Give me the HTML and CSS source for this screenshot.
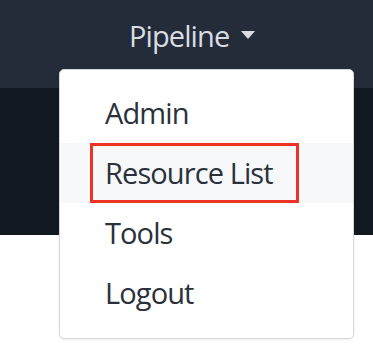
FILE: index.html
```html
<!DOCTYPE html>
<html>
<head>
<meta charset="utf-8">
<link rel="stylesheet" href="styles.css">
</head>
<body>
<nav class="navbar">
  <div class="nav-item">
    <span class="nav-link">Pipeline</span><span class="caret"></span>
    <div class="dropdown">
      <a class="dropdown-item">Admin</a>
      <a class="dropdown-item active">Resource List<span class="highlight"></span></a>
      <a class="dropdown-item">Tools</a>
      <a class="dropdown-item">Logout</a>
    </div>
  </div>
</nav>
<section class="hero"></section>
<main class="content"></main>
</body>
</html>
```

FILE: styles.css
```css
html, body {
  margin: 0;
  padding: 0;
  background: #ffffff;
  font-family: "Open Sans", "Noto Sans", sans-serif;
}
.navbar {
  height: 88px;
  background: #242c3a;
  display: flex;
  align-items: flex-start;
  padding-left: 129px;
  box-sizing: border-box;
}
.nav-item {
  position: relative;
  display: flex;
  align-items: center;
  padding-top: 16px;
}
.nav-link {
  color: #d9dde3;
  font-size: 29px;
  letter-spacing: -0.9px;
  line-height: 40px;
}
.caret {
  width: 0;
  height: 0;
  margin-left: 12px;
  margin-top: -3px;
  border-left: 7.5px solid transparent;
  border-right: 7.5px solid transparent;
  border-top: 8px solid #d9dde3;
}
.dropdown {
  position: absolute;
  left: -70px;
  top: 69px;
  width: 295px;
  height: 270px;
  box-sizing: border-box;
  background: #ffffff;
  border: 1px solid #d6d8db;
  border-radius: 5px;
  box-shadow: 0 1px 3px rgba(0,0,0,0.08);
  padding-top: 13px;
  display: flex;
  flex-direction: column;
  z-index: 2;
}
.dropdown-item {
  position: relative;
  display: block;
  height: 60px;
  line-height: 60px;
  padding-left: 45px;
  font-size: 29px;
  letter-spacing: -0.9px;
  color: #2a313b;
}
.dropdown-item.active {
  background: #f7f8fa;
}
.highlight {
  position: absolute;
  left: 30px;
  top: 0;
  width: 209px;
  height: 60px;
  box-sizing: border-box;
  border: 3px solid #ee3224;
}
.hero {
  height: 147px;
  background: #121921;
}
.content {
  height: 121px;
  background: #ffffff;
}
```
